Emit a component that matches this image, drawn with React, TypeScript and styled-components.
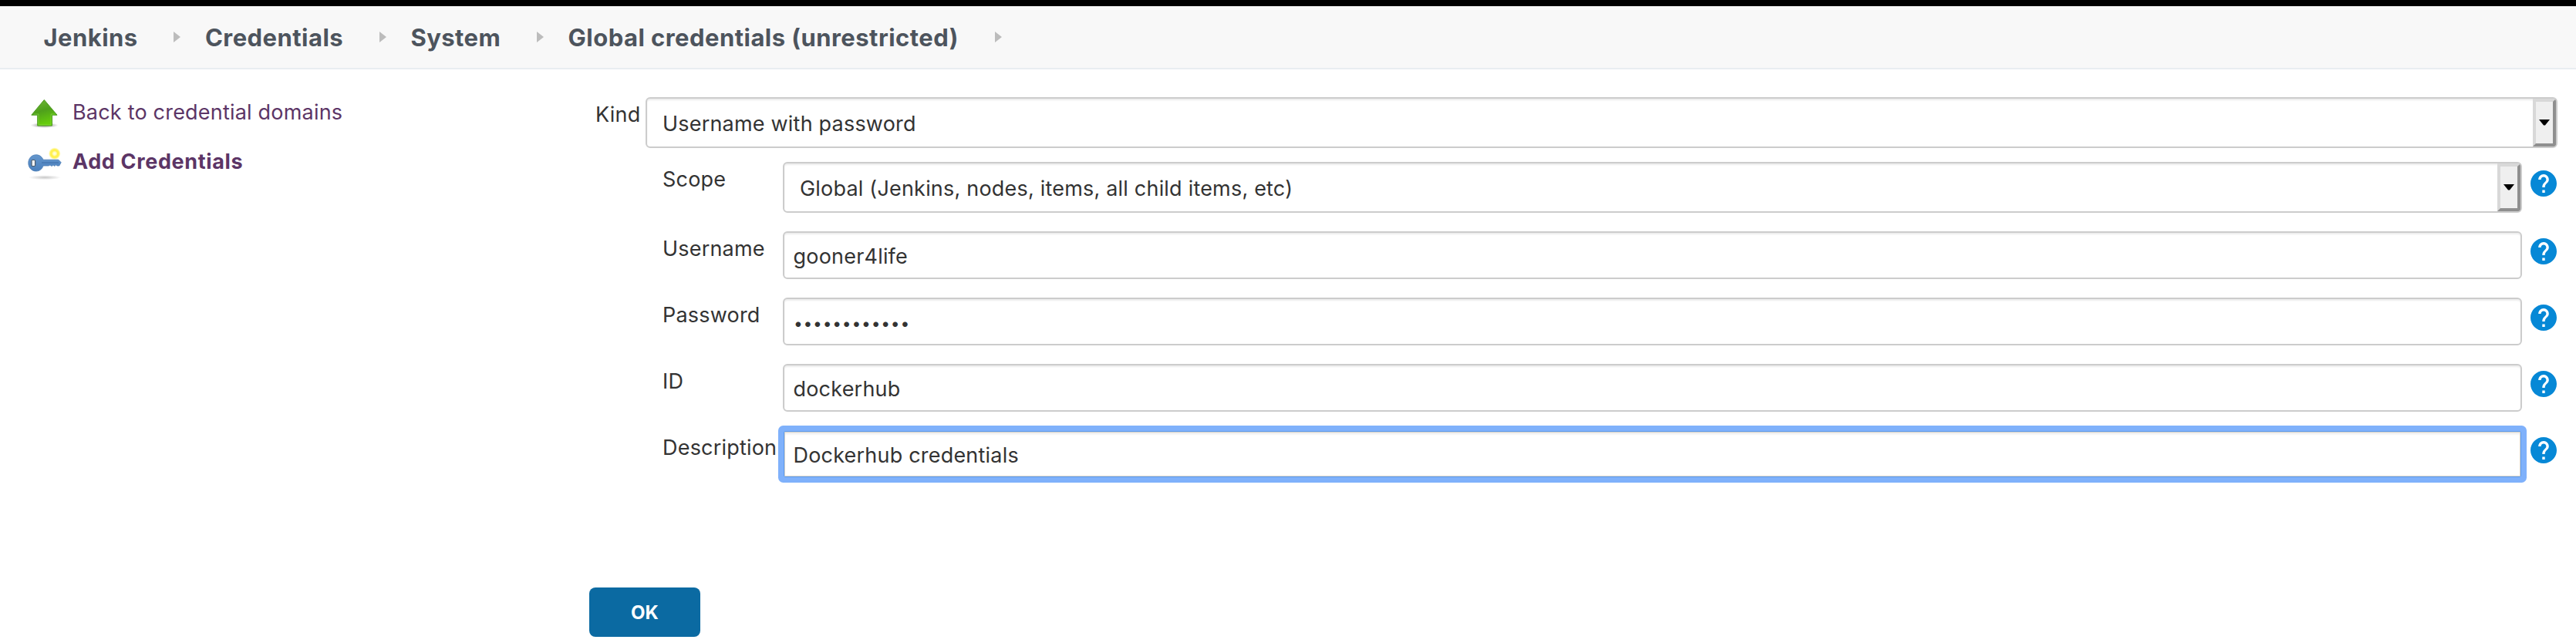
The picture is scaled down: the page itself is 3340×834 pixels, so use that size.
import React from 'react';
import styled, { createGlobalStyle, css } from 'styled-components';

const GlobalStyle = createGlobalStyle`
  * { box-sizing: border-box; }
  body {
    margin: 0;
    background: #fff;
    color: #333;
    font-family: Inter, "Liberation Sans", sans-serif;
    font-size: 27px;
    line-height: 32px;
    letter-spacing: 0.2px;
  }
`;

const Page = styled.div`
  height: 834px;
  overflow: hidden;
  border-top: 8px solid #000;
`;

const Breadcrumbs = styled.nav`
  display: flex;
  align-items: center;
  height: 82px;
  padding: 0 56.5px;
  background: #f8f8f8;
  border-bottom: 2px solid #e9edf1;
`;

const Crumb = styled.a`
  padding-top: 2px;
  color: #4d545d;
  font-size: 31px;
  font-weight: 700;
  line-height: 36px;
  letter-spacing: 0.46px;
  white-space: nowrap;
`;

const Separator = styled.svg`
  flex: none;
  width: 9px;
  height: 14px;
  margin: 0 31.5px 0 46.8px;
  fill: #bcbcbc;
`;

const Body = styled.div`
  display: flex;
`;

const SidePanel = styled.aside`
  flex: none;
  width: 764px;
  padding: 23px 0 0 36px;
`;

const Task = styled.a<{ $active?: boolean }>`
  display: flex;
  align-items: center;
  gap: 14px;
  height: 64px;
  color: #5c3566;
  font-weight: ${(p) => (p.$active ? 700 : 400)};
  letter-spacing: ${(p) => (p.$active ? '0.65px' : '0.2px')};
`;

const TaskName = styled.span`
  padding-top: 1px;
`;

const TaskIcon = styled.svg`
  flex: none;
  width: 44px;
  height: 64px;
`;

const Main = styled.main`
  flex: 1;
  padding: 36px 24px 0 0;
`;

const KindRow = styled.div`
  display: grid;
  grid-template-columns: 65px 1fr;
  margin-left: 8px;
  height: 84px;
  align-items: start;
`;

const Fields = styled.div`
  margin-left: 95px;
`;

const FieldRow = styled.div<{ $height?: number }>`
  display: grid;
  grid-template-columns: 156px 1fr 35px;
  align-items: start;
  height: ${(p) => p.$height ?? 86}px;
`;

const Label = styled.label`
  padding-top: 7px;
  white-space: nowrap;
`;

const box = css`
  display: flex;
  background: #fff;
  border: 2px solid #ccc;
  border-radius: 6px;
  box-shadow: inset 0 2px 2px rgba(0, 0, 0, 0.075);
  white-space: nowrap;
`;

const SelectBox = styled.div`
  ${box}
  justify-content: space-between;
  height: 66px;
  padding-left: 20px;
`;

const SelectValue = styled.span`
  padding-top: 17px;
`;

const DropButton = styled.span`
  display: flex;
  align-items: center;
  justify-content: center;
  width: 30px;
  height: 62px;
  border: 4px solid;
  border-color: #d8d8d8 #8f8f8f #8f8f8f #d8d8d8;
  border-radius: 0 4px 4px 0;
  background: #efefef;
`;

const Caret = styled.svg`
  width: 14px;
  height: 8px;
  margin-top: -1px;
`;

const TextBox = styled.div<{ $focused?: boolean }>`
  ${box}
  height: 62px;
  padding: 15px 11.5px 0;
  ${(p) =>
    p.$focused &&
    css`
      border-color: #5d9bee;
      border-width: 1px;
      margin: 1px;
      height: 60px;
      box-shadow: inset 0 0 0 1px #d6d2c9, inset 0 3px 3px rgba(0, 0, 0, 0.08), 0 0 0 7px #7fb1fb;
      border-radius: 2px;
    `}
`;

const Dots = styled.span`
  display: flex;
  font-size: 21px;
  line-height: 33px;
  letter-spacing: 0;
`;

const Dot = styled.span`
  width: 12.6px;
  text-align: center;
`;

const Help = styled.a<{ $top: number }>`
  display: block;
  width: 34px;
  height: 34px;
  margin-top: ${(p) => p.$top}px;
`;

const FieldWithHelp = styled.div`
  padding-right: 11px;
`;

const SubmitButton = styled.button`
  display: block;
  width: 144px;
  height: 64px;
  margin-top: 118px;
  padding: 2px 0 0;
  border: 0;
  border-radius: 8px;
  background: #0b6aa2;
  color: #fff;
  font: 700 24px/30px Inter, "Liberation Sans", sans-serif;
  letter-spacing: 0;
`;

const HelpIcon = ({ top }: { top: number }) => (
  <Help $top={top}>
    <svg width="34" height="34" viewBox="2 2 20 20">
      <path
        fill="#0688d6"
        d="M12 2C6.48 2 2 6.48 2 12s4.48 10 10 10 10-4.48 10-10S17.52 2 12 2zm1 17h-2v-2h2v2zm2.07-7.75l-.9.92C13.45 12.9 13 13.5 13 15h-2v-.5c0-1.1.45-2.1 1.17-2.83l1.24-1.26c.37-.36.59-.86.59-1.41 0-1.1-.9-2-2-2s-2 .9-2 2H8c0-2.21 1.79-4 4-4s4 1.79 4 4c0 .88-.36 1.68-.93 2.25z"
      />
    </svg>
  </Help>
);

const Select = ({ children }: { children: React.ReactNode }) => (
  <SelectBox>
    <SelectValue>{children}</SelectValue>
    <DropButton>
      <Caret viewBox="0 0 14 8">
        <path d="M0 0H14L8 7.5H6Z" />
      </Caret>
    </DropButton>
  </SelectBox>
);

const UpArrowIcon = () => (
  <TaskIcon viewBox="0 0 44 64">
    <defs>
      <linearGradient id="arrowFill" x1="0" y1="0" x2="0.3" y2="1">
        <stop offset="0" stopColor="#73b83a" />
        <stop offset="0.5" stopColor="#4fa01c" />
        <stop offset="1" stopColor="#66cc0c" />
      </linearGradient>
      <radialGradient id="arrowShade">
        <stop offset="0" stopColor="#000" stopOpacity="0.5" />
        <stop offset="1" stopColor="#000" stopOpacity="0" />
      </radialGradient>
    </defs>
    <ellipse cx="21.5" cy="49.5" rx="18" ry="3.5" fill="url(#arrowShade)" />
    <path d="M21.3 16.5L38 36.2H31.5V50H12.7V36.2H4.8Z" fill="url(#arrowFill)" stroke="#4c9a20" strokeLinejoin="round" />
    <path d="M14 48.7V35H7.8" fill="none" stroke="#8fd653" strokeOpacity="0.55" />
    <path d="M14 48.8H30.2V35H35.5" fill="none" stroke="#8fe04a" strokeOpacity="0.55" />
  </TaskIcon>
);

const KeyIcon = () => (
  <TaskIcon viewBox="0 0 44 64">
    <defs>
      <linearGradient id="keyFill" x1="0" y1="0" x2="0" y2="1">
        <stop offset="0" stopColor="#6496cc" />
        <stop offset="1" stopColor="#4a80bd" />
      </linearGradient>
      <radialGradient id="keyShade">
        <stop offset="0" stopColor="#000" stopOpacity="0.22" />
        <stop offset="1" stopColor="#000" stopOpacity="0" />
      </radialGradient>
      <radialGradient id="glow">
        <stop offset="0" stopColor="#fffff0" />
        <stop offset="0.3" stopColor="#fffbb0" />
        <stop offset="0.5" stopColor="#fff04a" />
        <stop offset="0.75" stopColor="#fff25a" />
        <stop offset="1" stopColor="#fff79a" stopOpacity="0.3" />
      </radialGradient>
    </defs>
    <ellipse cx="22" cy="53.2" rx="21" ry="3" fill="url(#keyShade)" />
    <circle cx="34.8" cy="22.2" r="7.6" fill="url(#glow)" />
    <path
      d="M10.8 23.8C15.5 23.8 18.5 26.5 20 30.2H39.8L43.2 33.7L40.8 38H38L36.5 36.8L35 38.5L33 37L31 38.5L29 37L27 38H20C18.8 42 15.5 45 10.8 45C5 45 .8 40.3 .8 34.4S5 23.8 10.8 23.8Z"
      fill="url(#keyFill)"
      stroke="#4a7cb5"
      strokeWidth="0.8"
    />
    <path d="M18 34H40" stroke="#3c6ca6" strokeWidth="1" />
    <rect x="5" y="30.5" width="4.6" height="8" rx="1.2" fill="#f4f6f8" stroke="#4c5c6c" strokeWidth="1.2" />
  </TaskIcon>
);

const crumbs = ['Jenkins', 'Credentials', 'System', 'Global credentials (unrestricted)'];

export default function App() {
  return (
    <Page>
      <GlobalStyle />
      <Breadcrumbs>
        {crumbs.map((name) => (
          <React.Fragment key={name}>
            <Crumb>{name}</Crumb>
            <Separator viewBox="0 0 9 14">
              <path d="M0 0L9 7L0 14Z" />
            </Separator>
          </React.Fragment>
        ))}
      </Breadcrumbs>
      <Body>
        <SidePanel>
          <Task>
            <UpArrowIcon />
            <TaskName>Back to credential domains</TaskName>
          </Task>
          <Task $active>
            <KeyIcon />
            <TaskName>Add Credentials</TaskName>
          </Task>
        </SidePanel>
        <Main>
          <KindRow>
            <Label>Kind</Label>
            <Select>Username with password</Select>
          </KindRow>
          <Fields>
            <FieldRow $height={90}>
              <Label>Scope</Label>
              <FieldWithHelp>
                <Select>Global (Jenkins, nodes, items, all child items, etc)</Select>
              </FieldWithHelp>
              <HelpIcon top={11} />
            </FieldRow>
            <FieldRow>
              <Label>Username</Label>
              <FieldWithHelp>
                <TextBox>gooner4life</TextBox>
              </FieldWithHelp>
              <HelpIcon top={9} />
            </FieldRow>
            <FieldRow>
              <Label>Password</Label>
              <FieldWithHelp>
                <TextBox>
                  <Dots>
                    {Array.from({ length: 12 }, (_, i) => (
                      <Dot key={i}>•</Dot>
                    ))}
                  </Dots>
                </TextBox>
              </FieldWithHelp>
              <HelpIcon top={9} />
            </FieldRow>
            <FieldRow>
              <Label>ID</Label>
              <FieldWithHelp>
                <TextBox>dockerhub</TextBox>
              </FieldWithHelp>
              <HelpIcon top={9} />
            </FieldRow>
            <FieldRow>
              <Label>Description</Label>
              <FieldWithHelp>
                <TextBox $focused>Dockerhub credentials</TextBox>
              </FieldWithHelp>
              <HelpIcon top={9} />
            </FieldRow>
          </Fields>
          <SubmitButton>OK</SubmitButton>
        </Main>
      </Body>
    </Page>
  );
}
